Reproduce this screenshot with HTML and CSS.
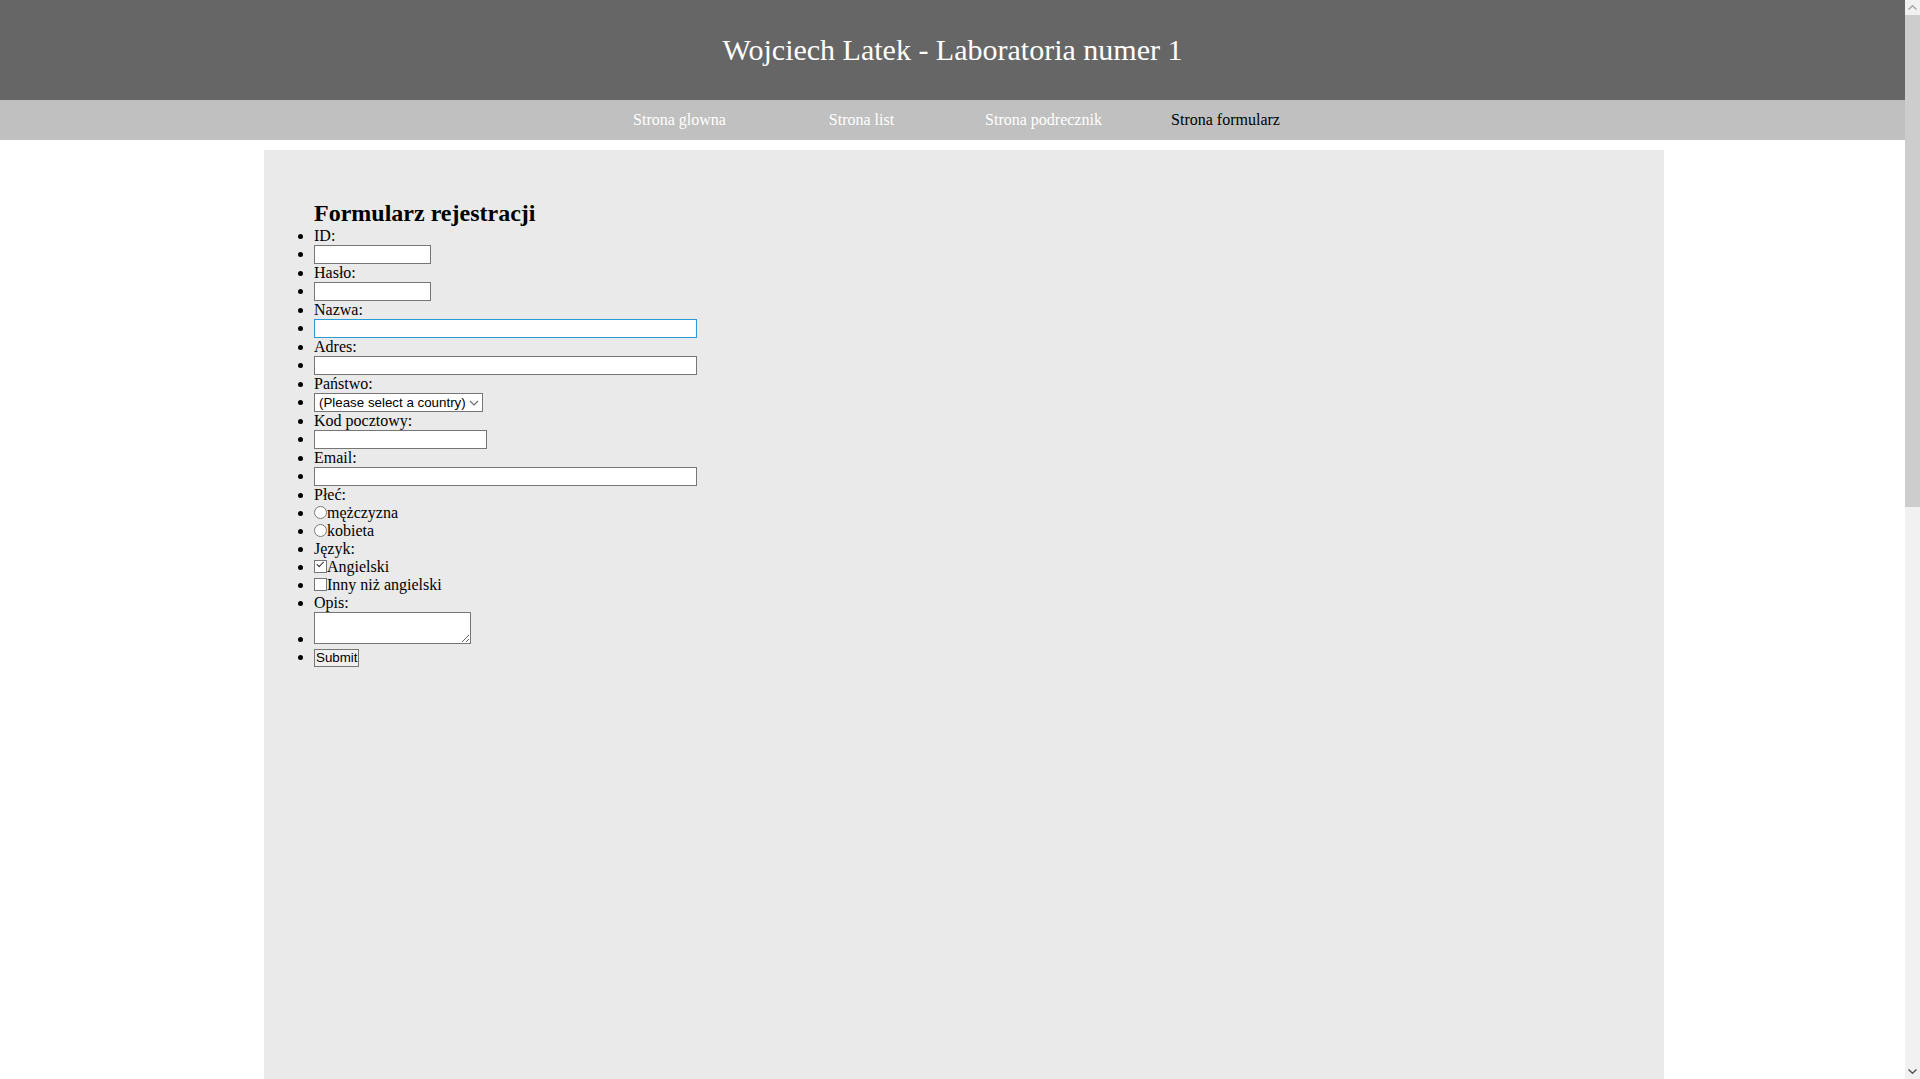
FILE: index.html
```html
<!DOCTYPE html>
<html lang="pl">
<head>
<meta charset="utf-8">
<title>Formularz</title>
<link rel="stylesheet" href="styles.css">
</head>
<body>
<div class="page">
<header class="site-header">
  <h1 class="site-title">Wojciech Latek - Laboratoria numer 1</h1>
</header>
<nav class="main-nav">
  <ul class="nav-list">
    <li class="nav-item"><a class="nav-link" href="#">Strona glowna</a></li>
    <li class="nav-item"><a class="nav-link" href="#">Strona list</a></li>
    <li class="nav-item"><a class="nav-link" href="#">Strona podrecznik</a></li>
    <li class="nav-item"><a class="nav-link nav-link-active" href="#">Strona formularz</a></li>
  </ul>
</nav>
<main class="content">
  <form class="reg-form">
    <h2 class="form-title">Formularz rejestracji</h2>
    <ul class="form-list">
      <li class="row">ID:</li>
      <li class="row"><input class="field field-short" type="text"></li>
      <li class="row">Hasło:</li>
      <li class="row"><input class="field field-short" type="password"></li>
      <li class="row">Nazwa:</li>
      <li class="row"><input class="field field-long field-focus" type="text"></li>
      <li class="row">Adres:</li>
      <li class="row"><input class="field field-long" type="text"></li>
      <li class="row">Państwo:</li>
      <li class="row"><span class="select-wrap"><select class="select"><option>(Please select a country)</option></select><svg class="select-arrow" width="10" height="6" viewBox="0 0 10 6"><path d="M1 1 L5 5 L9 1" fill="none" stroke="#6d6d6d" stroke-width="1.2"/></svg></span></li>
      <li class="row">Kod pocztowy:</li>
      <li class="row"><input class="field field-mid" type="text"></li>
      <li class="row">Email:</li>
      <li class="row"><input class="field field-long" type="text"></li>
      <li class="row">Płeć:</li>
      <li class="row"><input class="radio" type="radio" name="plec">mężczyzna</li>
      <li class="row"><input class="radio" type="radio" name="plec">kobieta</li>
      <li class="row">Język:</li>
      <li class="row"><input class="check" type="checkbox" checked>Angielski</li>
      <li class="row"><input class="check" type="checkbox">Inny niż angielski</li>
      <li class="row">Opis:</li>
      <li class="row"><textarea class="area"></textarea></li>
      <li class="row"><button class="submit" type="button">Submit</button></li>
    </ul>
  </form>
</main>
</div>
<div class="scrollbar" aria-hidden="true">
  <div class="sb-btn"><svg width="9" height="5" viewBox="0 0 9 5"><path d="M0.5 4.5 L4.5 0.8 L8.5 4.5" fill="none" stroke="#a3a3a3" stroke-width="1.4"/></svg></div>
  <div class="sb-track"><div class="sb-thumb"></div></div>
  <div class="sb-btn"><svg width="9" height="5" viewBox="0 0 9 5"><path d="M0.5 0.5 L4.5 4.2 L8.5 0.5" fill="none" stroke="#505050" stroke-width="1.4"/></svg></div>
</div>
</body>
</html>
```
FILE: styles.css
```css
html, body {
  margin: 0;
  padding: 0;
}
body {
  font-family: "Liberation Serif", "Times New Roman", serif;
  font-size: 16px;
  color: #000;
  background: #fff;
}
.page {
  width: 1905px;
  min-height: 2296px;
}
.site-header {
  background: #666666;
  height: 100px;
  display: flex;
  align-items: center;
  justify-content: center;
}
.site-title {
  margin: 0;
  font-weight: normal;
  font-size: 30px;
  line-height: 34px;
  color: #fff;
}
.main-nav {
  background: #c0c0c0;
  height: 40px;
}
.nav-list {
  list-style: none;
  margin: 0;
  padding: 0;
  display: flex;
  justify-content: center;
}
.nav-item {
  width: 182px;
  text-align: center;
  line-height: 40px;
}
.nav-link {
  color: #fff;
  text-decoration: none;
}
.nav-link-active {
  color: #000;
}
.content {
  background: #eaeaea;
  width: 1400px;
  min-height: 2080px;
  margin: 10px 0 0 264px;
  padding: 50px 0 0 0;
}
.reg-form {
  margin: 0;
}
.form-title {
  margin: 0 0 0 50px;
  font-size: 24px;
  line-height: 27px;
  font-weight: bold;
}
.form-list {
  margin: 0;
  padding: 0 0 0 50px;
  list-style: disc;
}
.row {
  line-height: 18px;
}
.field {
  box-sizing: border-box;
  height: 19px;
  margin: 0;
  padding: 0 2px;
  border: 1px solid #767676;
  border-radius: 0;
  background: #fff;
  font-family: "Liberation Sans", Arial, sans-serif;
  font-size: 13.33px;
  vertical-align: top;
  outline: none;
}
.field-short { width: 117px; }
.field-mid { width: 173px; }
.field-long { width: 383px; }
.field-focus { border-color: #2b9bd8; }
.select-wrap {
  position: relative;
  display: inline-block;
  vertical-align: top;
}
.select {
  box-sizing: border-box;
  -webkit-appearance: none;
  appearance: none;
  width: 169px;
  height: 19px;
  margin: 0;
  padding: 0 0 0 4px;
  border: 1px solid #767676;
  border-radius: 0;
  background: #fff;
  font-family: "Liberation Sans", Arial, sans-serif;
  font-size: 13.33px;
  line-height: 17px;
  color: #000;
  display: block;
}
.select-arrow {
  position: absolute;
  right: 4px;
  top: 7px;
}
.radio {
  margin: 0;
  width: 13px;
  height: 13px;
  vertical-align: -1px;
}
.check {
  -webkit-appearance: none;
  appearance: none;
  box-sizing: border-box;
  position: relative;
  margin: 0;
  width: 13px;
  height: 13px;
  border: 1px solid #767676;
  background: #fff;
  vertical-align: -1px;
}
.check:checked::after {
  content: "";
  position: absolute;
  left: 3px;
  top: 1px;
  width: 6px;
  height: 3px;
  border-left: 1.3px solid #333;
  border-bottom: 1.3px solid #333;
  transform: rotate(-45deg);
  transform-origin: 30% 80%;
}
.area {
  box-sizing: border-box;
  width: 157px;
  height: 32px;
  margin: 0;
  padding: 2px;
  border: 1px solid #767676;
  background: #fff;
  resize: both;
  font-family: "Liberation Mono", monospace;
  font-size: 13.33px;
  vertical-align: baseline;
}
.submit {
  box-sizing: border-box;
  height: 18px;
  margin: 0;
  padding: 0 1px;
  border: 1px solid #767676;
  border-radius: 0;
  background: #efefef;
  font-family: "Liberation Sans", Arial, sans-serif;
  font-size: 13.33px;
  line-height: 14px;
  color: #000;
}
.scrollbar {
  position: fixed;
  top: 0;
  right: 0;
  bottom: 0;
  width: 15px;
  background: #f1f1f1;
  display: flex;
  flex-direction: column;
}
.sb-btn {
  height: 15px;
  display: flex;
  align-items: center;
  justify-content: center;
}
.sb-track {
  flex: 1;
}
.sb-thumb {
  height: 492px;
  background: #cdcdcd;
}
```
